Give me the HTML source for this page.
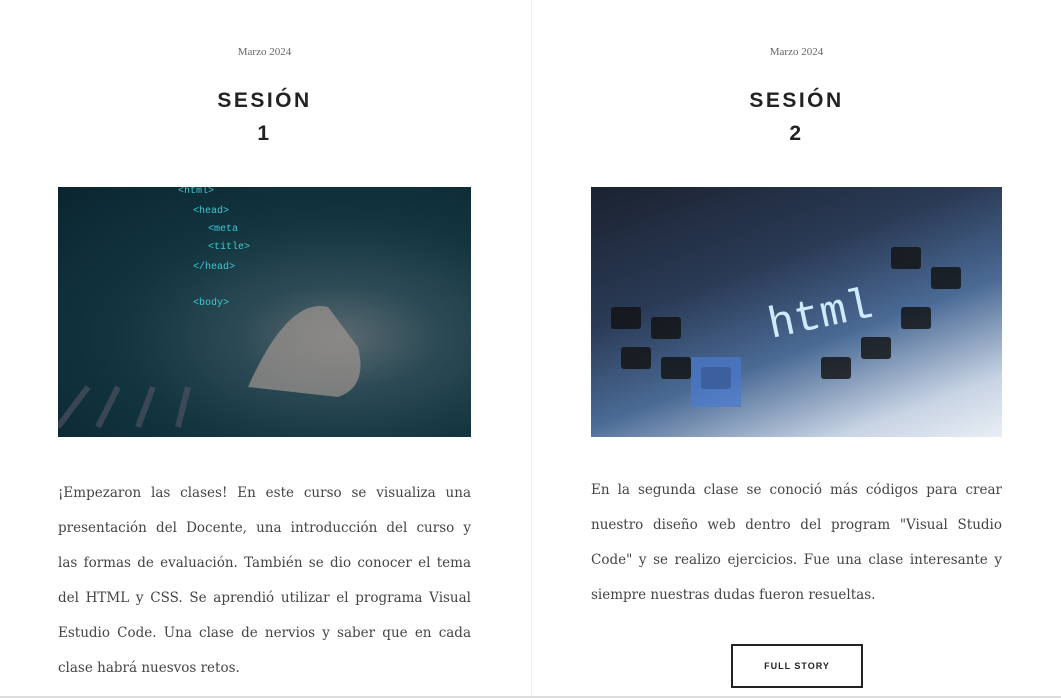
<!DOCTYPE html>
<html><head><meta charset="utf-8"><style>
body{margin:0;width:1061px;height:698px;background:#fff;position:relative;overflow:hidden;font-family:"Liberation Serif",serif}
.div{position:absolute;left:531px;top:0;width:1px;height:698px;background:#eee}
.bot{position:absolute;left:0;top:696px;width:1061px;height:2px;background:#ddd}
.col{position:absolute;top:0;width:413px}
.date{position:absolute;top:46px;width:100%;text-align:center;font-size:11px;color:#666}
.h{position:absolute;top:84px;width:100%;text-align:center;font-family:"Liberation Sans",sans-serif;font-weight:bold;font-size:21px;letter-spacing:2.5px;color:#222;line-height:33px}
.img{position:absolute;top:187px;left:0;width:100%;height:250px}
.t{position:absolute;top:476px;left:0;width:100%;font-family:"DejaVu Serif",serif;font-size:13.5px;line-height:35px;color:#444}
.t div{white-space:nowrap;text-align:justify;text-align-last:justify}
.t div.l{text-align-last:left}
.btn{position:absolute;left:140px;top:644px;width:132px;height:44px;border:2px solid #222;box-sizing:border-box;text-align:center;line-height:40px;font-family:"Liberation Sans",sans-serif;font-weight:bold;font-size:9px;letter-spacing:1px;color:#222}
</style></head><body>
<div class="div"></div><div class="bot"></div>
<div class="col" style="left:58px">
<div class="date">Marzo 2024</div>
<div class="h">SESIÓN<br>1</div>
<div class="img" style="background:radial-gradient(ellipse at 68% 60%,#5a6a70 0,#2c4a55 25%,#123540 55%,#0a2530 100%)">
<svg width="413" height="250" style="position:absolute;left:0;top:0">
<g fill="#3fc8d0" font-family="Liberation Mono" font-size="10"><text x="120" y="6">&lt;html&gt;</text><text x="135" y="26">&lt;head&gt;</text><text x="150" y="44">&lt;meta</text><text x="150" y="62">&lt;title&gt;</text><text x="135" y="82">&lt;/head&gt;</text><text x="135" y="118">&lt;body&gt;</text></g>
<path d="M190 200 Q230 110 270 120 L300 160 Q310 200 280 210 Z" fill="#a09590" opacity=".7"/>
<g stroke="#556" stroke-width="6" opacity=".6"><line x1="0" y1="240" x2="30" y2="200"/><line x1="40" y1="240" x2="60" y2="200"/><line x1="80" y1="240" x2="95" y2="200"/><line x1="120" y1="240" x2="130" y2="200"/></g>
</svg></div>
<div class="t">
<div>¡Empezaron las clases! En este curso se visualiza una</div>
<div>presentación del Docente, una introducción del curso y</div>
<div>las formas de evaluación. También se dio conocer el tema</div>
<div>del HTML y CSS. Se aprendió utilizar el programa Visual</div>
<div>Estudio Code. Una clase de nervios y saber que en cada</div>
<div class="l">clase habrá nuesvos retos.</div>
</div>
</div>
<div class="col" style="left:591px;width:411px">
<div class="date">Marzo 2024</div>
<div class="h">SESIÓN<br>2</div>
<div class="img" style="background:linear-gradient(160deg,#1a2230 0,#2a3a55 35%,#4a6a95 60%,#c8d4e4 85%,#e8eef4 100%)">
<svg width="411" height="250" style="position:absolute;left:0;top:0">
<g fill="#111" opacity=".8"><rect x="30" y="160" width="30" height="22" rx="3"/><rect x="70" y="170" width="30" height="22" rx="3"/><rect x="110" y="180" width="30" height="22" rx="3"/><rect x="20" y="120" width="30" height="22" rx="3"/><rect x="60" y="130" width="30" height="22" rx="3"/><rect x="230" y="170" width="30" height="22" rx="3"/><rect x="270" y="150" width="30" height="22" rx="3"/><rect x="310" y="120" width="30" height="22" rx="3"/><rect x="300" y="60" width="30" height="22" rx="3"/><rect x="340" y="80" width="30" height="22" rx="3"/></g>
<text x="175" y="140" fill="#cfeaff" font-family="Liberation Mono" font-size="44" transform="rotate(-12 230 120)">html</text>
<rect x="100" y="170" width="50" height="50" fill="#4a7ad0" opacity=".7"/>
</svg></div>
<div class="t" style="top:473px">
<div>En la segunda clase se conoció más códigos para crear</div>
<div>nuestro diseño web dentro del program "Visual Studio</div>
<div>Code" y se realizo ejercicios. Fue una clase interesante y</div>
<div class="l">siempre nuestras dudas fueron resueltas.</div>
</div>
<div class="btn">FULL STORY</div>
</div>
</body></html>
